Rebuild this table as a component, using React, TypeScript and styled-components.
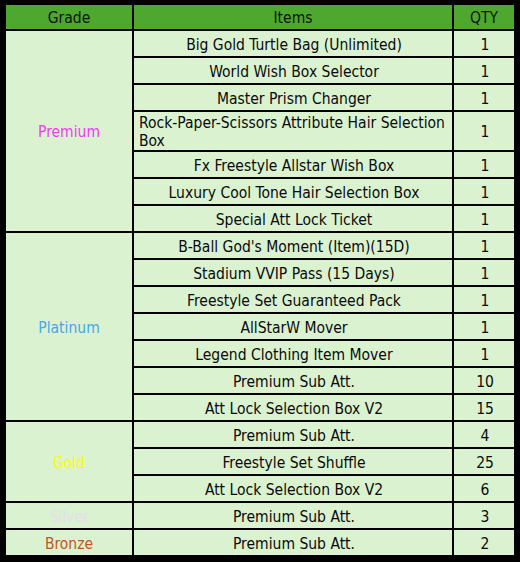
import styled, { createGlobalStyle } from 'styled-components';

const GlobalStyle = createGlobalStyle`
  html, body {
    margin: 0;
    padding: 0;
    background: #000;
  }

  body {
    font-family: 'DejaVu Sans Condensed', 'DejaVu Sans', Tahoma, sans-serif;
    font-size: 15.5px;
    color: #0a0a0a;
  }
`;

type Item = { name: string; qty: number };

type Section = {
  grade: string;
  color: string;
  items: Item[];
};

const sections: Section[] = [
  {
    grade: 'Premium',
    color: '#f03cf0',
    items: [
      { name: 'Big Gold Turtle Bag (Unlimited)', qty: 1 },
      { name: 'World Wish Box Selector', qty: 1 },
      { name: 'Master Prism Changer', qty: 1 },
      { name: 'Rock-Paper-Scissors Attribute Hair Selection Box', qty: 1 },
      { name: 'Fx Freestyle Allstar Wish Box', qty: 1 },
      { name: 'Luxury Cool Tone Hair Selection Box', qty: 1 },
      { name: 'Special Att Lock Ticket', qty: 1 },
    ],
  },
  {
    grade: 'Platinum',
    color: '#4aa8e4',
    items: [
      { name: "B-Ball God's Moment (Item)(15D)", qty: 1 },
      { name: 'Stadium VVIP Pass (15 Days)', qty: 1 },
      { name: 'Freestyle Set Guaranteed Pack', qty: 1 },
      { name: 'AllStarW Mover', qty: 1 },
      { name: 'Legend Clothing Item Mover', qty: 1 },
      { name: 'Premium Sub Att.', qty: 10 },
      { name: 'Att Lock Selection Box V2', qty: 15 },
    ],
  },
  {
    grade: 'Gold',
    color: '#ffff00',
    items: [
      { name: 'Premium Sub Att.', qty: 4 },
      { name: 'Freestyle Set Shuffle', qty: 25 },
      { name: 'Att Lock Selection Box V2', qty: 6 },
    ],
  },
  {
    grade: 'Silver',
    color: '#e4dfea',
    items: [{ name: 'Premium Sub Att.', qty: 3 }],
  },
  {
    grade: 'Bronze',
    color: '#c4561d',
    items: [{ name: 'Premium Sub Att.', qty: 2 }],
  },
];

const Table = styled.div`
  width: 520px;
  height: 562px;
  box-sizing: border-box;
  padding: 5px 6px 7px 6px;
  background: #000;
  display: flex;
  flex-direction: column;
  gap: 2px;
`;

const HeaderRow = styled.div`
  display: grid;
  grid-template-columns: 126px 318px 60px;
  column-gap: 2px;
  height: 24px;
`;

const HeaderCell = styled.div`
  background: #4ea72e;
  box-sizing: border-box;
  padding-top: 2px;
  display: flex;
  align-items: center;
  justify-content: center;
  color: #111;
`;

const SectionBlock = styled.div`
  display: grid;
  grid-template-columns: 126px 1fr;
  column-gap: 2px;
`;

const GradeCell = styled.div<{ $color: string }>`
  background: #daf2d0;
  color: ${(p) => p.$color};
  padding-top: 2px;
  display: flex;
  align-items: center;
  justify-content: center;
`;

const ItemList = styled.div`
  display: flex;
  flex-direction: column;
  gap: 2px;
`;

const ItemRow = styled.div`
  display: grid;
  grid-template-columns: 318px 60px;
  column-gap: 2px;
`;

const Cell = styled.div`
  background: #daf2d0;
  min-height: 25px;
  box-sizing: border-box;
  padding: 2px 3px 0 5px;
  display: flex;
  align-items: center;
  justify-content: center;
  line-height: 18px;
`;

const CellText = styled.span`
  display: inline-block;
  text-align: left;
`;

export default function App() {
  return (
    <>
      <GlobalStyle />
      <Table>
        <HeaderRow>
          <HeaderCell>Grade</HeaderCell>
          <HeaderCell>Items</HeaderCell>
          <HeaderCell>QTY</HeaderCell>
        </HeaderRow>
        {sections.map((s) => (
          <SectionBlock key={s.grade}>
            <GradeCell $color={s.color}>{s.grade}</GradeCell>
            <ItemList>
              {s.items.map((it, i) => (
                <ItemRow key={i}>
                  <Cell>
                    <CellText>{it.name}</CellText>
                  </Cell>
                  <Cell>{it.qty}</Cell>
                </ItemRow>
              ))}
            </ItemList>
          </SectionBlock>
        ))}
      </Table>
    </>
  );
}
